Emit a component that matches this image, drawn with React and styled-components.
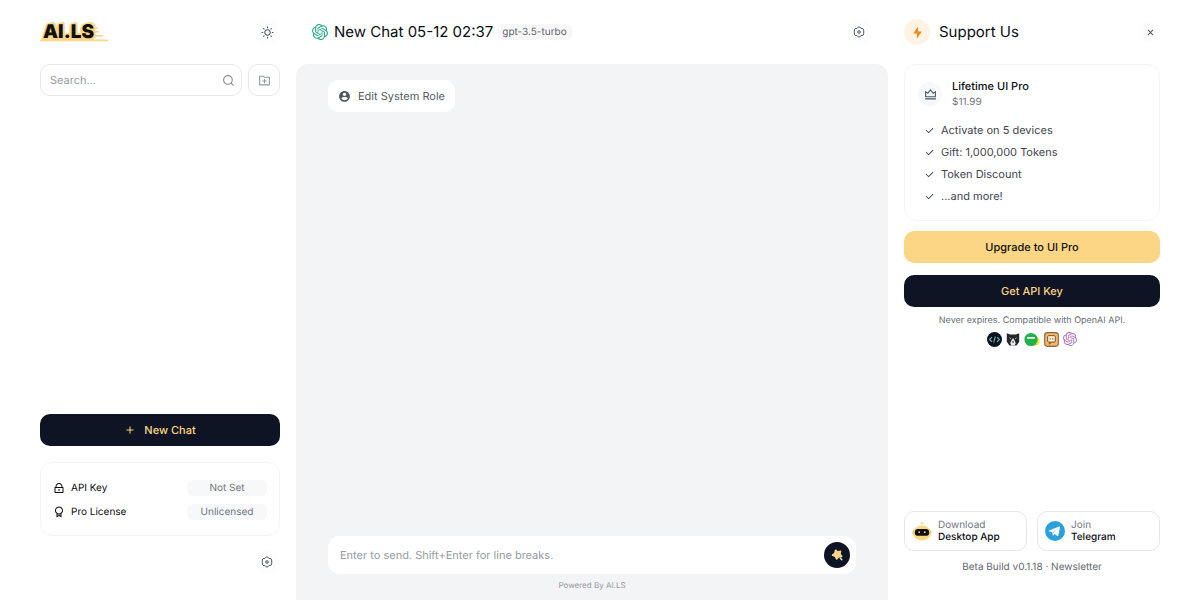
import React from 'react';
import styled, { createGlobalStyle } from 'styled-components';
import {
  RiSunLine, RiSearchLine, RiFolderAddLine, RiAddLine, RiLockLine, RiAwardLine,
  RiAccountCircleFill, RiFlashlightFill, RiCloseLine,
  RiVipCrownLine, RiCheckLine,
} from 'react-icons/ri';
import { SiOpenai } from 'react-icons/si';

const ink = '#0f1424';
const gold = '#fcd685';
const line = '#e5e7eb';
const faint = '#f3f4f6';

const GlobalStyle = createGlobalStyle`
  *, *::before, *::after { box-sizing: border-box; }
  body { margin: 0; background: #fff; }
  body, button, input { font-family: Inter, "Liberation Sans", sans-serif; text-rendering: geometricPrecision; }
  button { border: 0; padding: 0; cursor: pointer; }
  a { color: inherit; text-decoration: none; }
  ul { list-style: none; margin: 0; padding: 0; }
  h1, h2, h3, p, dl, dd, dt { margin: 0; font-weight: inherit; }
  svg { display: block; flex: none; }
`;

const Page = styled.div`
  display: grid;
  grid-template-columns: 240px minmax(0, 1fr) 256px;
  column-gap: 16px;
  min-height: 100vh;
  padding: 0 40px;
  color: #0b0d12;
`;

const Column = styled.div`
  display: flex;
  flex-direction: column;
  min-width: 0;
`;

const Header = styled.header`
  display: flex;
  align-items: center;
  height: 64px;
  padding: ${(p) => p.$pad || '0'};
  gap: ${(p) => p.$gap || '0'};
`;

const Spacer = styled.div`
  flex: 1;
`;

const IconButton = styled.button`
  display: grid;
  place-items: center;
  width: ${(p) => p.$size || 24}px;
  height: ${(p) => p.$size || 24}px;
  border-radius: 8px;
  background: #fdfdfd;
  color: #4b5563;
`;

const LogoLink = styled.a`
  position: relative;
  display: block;
  padding: 0 17px 0 3px;
  font-size: 19px;
  line-height: 24px;
  font-weight: 900;
  color: #111;
`;

const LogoText = styled.span`
  position: relative;
  text-shadow: -1px -1px 0 ${gold}, 1px -1px 0 ${gold}, -2px 1px 0 ${gold}, 2px 1px 0 ${gold}, 0 2px 0 ${gold}, 2px -2px 0 ${gold}, -2px 2px 0 ${gold}, 2px 2px 0 ${gold};
`;

const LogoLines = styled.svg`
  position: absolute;
  inset: 0;
`;

const SearchRow = styled.div`
  display: flex;
  gap: 6px;
`;

const SearchBox = styled.label`
  display: flex;
  flex: 1;
  align-items: center;
  min-width: 0;
  height: 32px;
  padding: 0 6px 0 9px;
  border: 1px solid ${line};
  border-radius: 10px;
  color: #8b9099;
`;

const TextInput = styled.input`
  flex: 1;
  min-width: 0;
  padding: 0;
  border: 0;
  outline: 0;
  background: transparent;
  font-size: 11px;
  line-height: 16px;
  color: ${ink};
  &::placeholder { color: #969aa1; opacity: 1; }
`;

const FolderButton = styled.button`
  display: grid;
  place-items: center;
  width: 32px;
  height: 32px;
  border: 1px solid ${line};
  border-radius: 10px;
  background: #fff;
  color: #9297a0;
`;

const WideButton = styled.button`
  display: flex;
  align-items: center;
  justify-content: center;
  gap: 8px;
  width: 100%;
  height: 32px;
  border-radius: 10px;
  background: ${(p) => (p.$gold ? gold : ink)};
  color: ${(p) => (p.$gold ? '#111' : gold)};
  font-size: 11px;
  font-weight: 500;
`;

const StatusCard = styled.dl`
  display: flex;
  flex-direction: column;
  gap: 8px;
  margin: 16px 0 14px;
  padding: 17px 12px 15px;
  border: 1px solid ${faint};
  border-radius: 12px;
`;

const StatusRow = styled.div`
  display: flex;
  align-items: center;
  justify-content: space-between;
`;

const StatusName = styled.dt`
  display: flex;
  align-items: center;
  gap: 6px;
  font-size: 10px;
  line-height: 16px;
`;

const StatusValue = styled.dd`
  width: 80px;
  border-radius: 6px;
  background: #f7f8f9;
  color: #71767e;
  font-size: 10px;
  line-height: 16px;
  text-align: center;
`;

const SideFooter = styled.div`
  display: flex;
  justify-content: flex-end;
  padding: 0 1px 26px 0;
`;

const ChatTitle = styled.h1`
  margin-left: 6px;
  font-size: 15px;
  line-height: 20px;
  font-weight: 400;
`;

const ModelTag = styled.span`
  margin-left: 3px;
  padding: 0 6px;
  border-radius: 8px;
  background: #f7f7f8;
  color: #63676e;
  font-size: 10px;
  line-height: 16px;
`;

const ChatPane = styled.main`
  display: flex;
  flex: 1;
  flex-direction: column;
  align-items: flex-start;
  padding: 16px 32px 7px;
  border-radius: 12px 12px 0 0;
  background: #f3f4f6;
`;

const RoleButton = styled.button`
  display: flex;
  align-items: center;
  gap: 7px;
  height: 32px;
  padding: 0 10px;
  border-radius: 10px;
  background: #fff;
  color: #565b63;
  font-size: 11px;
`;

const Composer = styled.form`
  display: flex;
  align-items: center;
  align-self: stretch;
  height: 38px;
  padding: 0 6px 0 12px;
  border-radius: 12px;
  background: #fff;
`;

const SendButton = styled.button`
  display: grid;
  place-items: center;
  width: 26px;
  height: 26px;
  border-radius: 50%;
  background: ${ink};
`;

const Powered = styled.p`
  align-self: center;
  margin-top: 3px;
  color: #94989f;
  font-size: 8px;
  line-height: 16px;
`;

const Badge = styled.span`
  display: grid;
  place-items: center;
  width: ${(p) => p.$size}px;
  height: ${(p) => p.$size}px;
  border-radius: 50%;
  background: ${(p) => p.$bg};
  color: ${(p) => p.$color};
`;

const PanelTitle = styled.h2`
  font-size: 15px;
  line-height: 20px;
  font-weight: 400;
`;

const PlanCard = styled.section`
  padding: 13px 13px 16px;
  border: 1px solid ${faint};
  border-radius: 12px;
`;

const PlanHead = styled.div`
  display: flex;
  align-items: center;
  gap: 10px;
`;

const PlanName = styled.h3`
  font-size: 11px;
  line-height: 16px;
  font-weight: 500;
`;

const PlanPrice = styled.p`
  color: #71767e;
  font-size: 10px;
  line-height: 16px;
`;

const Perks = styled.ul`
  display: grid;
  gap: 6px;
  margin-top: 12px;
  padding-left: 6px;
`;

const Perk = styled.li`
  display: flex;
  align-items: center;
  gap: 6px;
  color: #3f444d;
  font-size: 11px;
  line-height: 16px;
`;

const Offers = styled.div`
  display: grid;
  gap: 12px;
  margin-top: 10px;
`;

const Note = styled.p`
  margin-top: 6px;
  color: #686d75;
  font-size: 9px;
  line-height: 16px;
  text-align: center;
`;

const Partners = styled.div`
  display: flex;
  justify-content: center;
  gap: 4px;
  margin-top: 3px;
`;

const Links = styled.nav`
  display: grid;
  grid-template-columns: 1fr 1fr;
  gap: 10px;
`;

const AppLink = styled.a`
  display: flex;
  align-items: center;
  gap: 6px;
  height: 40px;
  padding: 0 7px;
  border: 1px solid ${line};
  border-radius: 10px;
  font-size: 10px;
  line-height: 12px;
`;

const LinkSmall = styled.span`
  display: block;
  color: #71767e;
`;

const LinkStrong = styled.span`
  display: block;
  font-weight: 500;
`;

const Build = styled.p`
  margin: 8px 0 25px;
  color: #63676e;
  font-size: 10px;
  line-height: 16px;
  text-align: center;
`;

const GearIcon = () => (
  <svg width="12" height="12" viewBox="0 0 24 24" fill="none" stroke="currentColor" strokeWidth="2" strokeLinejoin="round" aria-hidden="true">
    <path d="M9 3.400 12 1.600l3 1.800 1.200 1.600h3.400l1.800 3-.2 2.400.8 1.600-.8 1.600.2 2.400-1.800 3h-3.400L15 20.600l-3 1.800-3-1.800L7.800 19H4.400l-1.800-3 .2-2.400L2 12l.8-1.600L2.600 8l1.800-3h3.400Z" />
    <circle cx="12" cy="12" r="2.600" />
  </svg>
);

const StarIcon = () => (
  <svg width="14" height="14" viewBox="0 0 14 14" aria-hidden="true">
    <path d="M5.600 2.200 7.600 4l2.900-.8-.6 2.900 1.800 2.300-3 .3L6.600 11 5.400 8.300 2.600 7.200 4.900 5.200Z" fill={gold} stroke={gold} strokeWidth="1.600" strokeLinejoin="round" />
    <path d="m10.200 10 1.600 1.800" stroke="#d9ead0" strokeWidth="1.400" strokeLinecap="round" />
  </svg>
);

const CodeIcon = () => (
  <svg width="15" height="15" viewBox="0 0 14 14" fill="none" aria-hidden="true">
    <circle cx="7" cy="7" r="7" fill="#08141f" />
    <path d="M4.600 4.800 2.400 7l2.200 2.200M9.400 4.800 11.600 7 9.400 9.200M7.800 4.300 6.200 9.700" stroke="#7fb4c4" strokeWidth="1" />
  </svg>
);

const BearIcon = () => (
  <svg width="14" height="15" viewBox="0 0 14 14" aria-hidden="true">
    <path d="M.8.800 4 2h6L13.200.8v8.400L10.600 13H3.400L.8 9.200Z" fill="#25272b" />
    <path d="M7 5.500 8.600 8l1.200 2.600L8.600 13H5.400l-1.200-2.400L5.400 8Z" fill="#e9e9e9" />
    <path d="m3.400 5.200 1.600 1.200M10.600 5.200 9 6.400" stroke="#c8c8c8" strokeWidth=".8" />
    <path d="M5.800 9h2.400L7 10.600Z" fill="#111" />
  </svg>
);

const BubbleIcon = () => (
  <svg width="16" height="15" viewBox="0 0 16 14" aria-hidden="true">
    <circle cx="11" cy="8.600" r="4.600" fill="#f5e11c" />
    <circle cx="7" cy="7" r="6.600" fill="#22b24c" />
    <path d="M3 5.400h8" stroke="#fff" strokeWidth="1.600" />
  </svg>
);

const BoxIcon = () => (
  <svg width="15" height="15" viewBox="0 0 14 14" aria-hidden="true">
    <rect x=".6" y=".6" width="12.800" height="12.800" rx="2.600" fill="#f5b765" stroke="#8a6346" strokeWidth="1" />
    <rect x="3.400" y="3.400" width="7.200" height="6" rx="1" fill="#fff1d6" stroke="#7a4d2c" strokeWidth=".9" />
    <path d="M5.200 6.400h1.200M7.600 6.400h1.200M5 9.600v1.800l1.800-1.800" stroke="#7a4d2c" strokeWidth=".9" fill="none" />
  </svg>
);

const GradientDefs = styled.svg`
  position: absolute;
`;

const RobotIcon = () => (
  <svg width="20" height="20" viewBox="0 0 20 20" aria-hidden="true">
    <circle cx="10" cy="2.200" r="1.300" fill={gold} />
    <rect x=".5" y="8.400" width="19" height="6" rx="2.600" fill="#efc06a" />
    <ellipse cx="10" cy="12" rx="9" ry="7.400" fill={gold} />
    <rect x="2.800" y="8" width="14.400" height="6.800" rx="3.400" fill="#101010" />
    <circle cx="7.200" cy="11.200" r=".9" fill={gold} />
    <circle cx="12.800" cy="11.200" r=".9" fill={gold} />
  </svg>
);

const TelegramIcon = () => (
  <svg width="20" height="20" viewBox="0 0 20 20" aria-hidden="true">
    <circle cx="10" cy="10" r="10" fill="#2aa1de" />
    <path d="m3.600 9.800 10.600-4.200c.6-.2 1 .1.8.9l-1.700 8.100c-.1.600-.5.700-1 .5l-2.600-2-1.300 1.300c-.3.300-.6.200-.6-.2l-.7-2.900-3.300-1c-.6-.2-.6-.4-.2-.5Z" fill="#fff" />
    <path d="m7.200 11.200 5.400-3.800-4.300 4.400-.3 2.200Z" fill="#a9cfe6" />
  </svg>
);

const perks = ['Activate on 5 devices', 'Gift: 1,000,000 Tokens', 'Token Discount', '...and more!'];

export default function App() {
  return (
    <>
      <GlobalStyle />
      <GradientDefs width="0" height="0" aria-hidden="true">
        <linearGradient id="knot" x1="0" y1="0" x2="1" y2="1">
          <stop offset="0" stopColor="#8a6fe0" />
          <stop offset=".5" stopColor="#c95fb0" />
          <stop offset="1" stopColor="#5b8fe8" />
        </linearGradient>
      </GradientDefs>
      <Page>
        <Column as="aside">
          <Header $pad="0 1px 0 0">
            <LogoLink href="#" aria-label="AI.LS">
              <LogoLines viewBox="0 0 68 24" width="68" height="24" aria-hidden="true">
                <path d="M50 7h8v1.400H50ZM50 11h9v1.400H50ZM50 15h13v1.400H50ZM1 19.400h67v1.800H0Z" fill={gold} />
              </LogoLines>
              <LogoText>AI.LS</LogoText>
            </LogoLink>
            <Spacer />
            <IconButton aria-label="Switch theme"><RiSunLine size={13} /></IconButton>
          </Header>
          <SearchRow>
            <SearchBox>
              <TextInput type="search" placeholder="Search..." aria-label="Search chats" />
              <RiSearchLine size={13} />
            </SearchBox>
            <FolderButton aria-label="New folder"><RiFolderAddLine size={13} /></FolderButton>
          </SearchRow>
          <Spacer />
          <WideButton><RiAddLine size={12} />New Chat</WideButton>
          <StatusCard>
            <StatusRow>
              <StatusName><RiLockLine size={12} />API Key</StatusName>
              <StatusValue>Not Set</StatusValue>
            </StatusRow>
            <StatusRow>
              <StatusName><RiAwardLine size={12} />Pro License</StatusName>
              <StatusValue>Unlicensed</StatusValue>
            </StatusRow>
          </StatusCard>
          <SideFooter>
            <IconButton aria-label="Settings"><GearIcon /></IconButton>
          </SideFooter>
        </Column>

        <Column>
          <Header $pad="0 17px 0 16px">
            <SiOpenai size={16} color="#1fa883" />
            <ChatTitle>New Chat 05-12 02:37</ChatTitle>
            <ModelTag>gpt-3.5-turbo</ModelTag>
            <Spacer />
            <IconButton aria-label="Chat settings"><GearIcon /></IconButton>
          </Header>
          <ChatPane>
            <RoleButton><RiAccountCircleFill size={13} />Edit System Role</RoleButton>
            <Spacer />
            <Composer onSubmit={(e) => e.preventDefault()}>
              <TextInput placeholder="Enter to send. Shift+Enter for line breaks." aria-label="Message" />
              <SendButton aria-label="Send"><StarIcon /></SendButton>
            </Composer>
            <Powered>Powered By AI.LS</Powered>
          </ChatPane>
        </Column>

        <Column as="aside">
          <Header $gap="9px">
            <Badge $size={26} $bg="#fff3e4" $color="#ee8a1c"><RiFlashlightFill size={13} /></Badge>
            <PanelTitle>Support Us</PanelTitle>
            <Spacer />
            <IconButton $size={20} aria-label="Close"><RiCloseLine size={11} /></IconButton>
          </Header>
          <PlanCard>
            <PlanHead>
              <Badge $size={24} $bg="#f7f8fa" $color="#4b5563"><RiVipCrownLine size={13} /></Badge>
              <div>
                <PlanName>Lifetime UI Pro</PlanName>
                <PlanPrice>$11.99</PlanPrice>
              </div>
            </PlanHead>
            <Perks>
              {perks.map((perk) => (
                <Perk key={perk}><RiCheckLine size={11} />{perk}</Perk>
              ))}
            </Perks>
          </PlanCard>
          <Offers>
            <WideButton $gold>Upgrade to UI Pro</WideButton>
            <WideButton>Get API Key</WideButton>
          </Offers>
          <Note>Never expires. Compatible with OpenAI API.</Note>
          <Partners>
            <CodeIcon />
            <BearIcon />
            <BubbleIcon />
            <BoxIcon />
            <SiOpenai size={14} fill="url(#knot)" />
          </Partners>
          <Spacer />
          <Links>
            <AppLink href="#">
              <RobotIcon />
              <span><LinkSmall>Download</LinkSmall><LinkStrong>Desktop App</LinkStrong></span>
            </AppLink>
            <AppLink href="#">
              <TelegramIcon />
              <span><LinkSmall>Join</LinkSmall><LinkStrong>Telegram</LinkStrong></span>
            </AppLink>
          </Links>
          <Build>Beta Build v0.1.18 · <a href="#">Newsletter</a></Build>
        </Column>
      </Page>
    </>
  );
}
